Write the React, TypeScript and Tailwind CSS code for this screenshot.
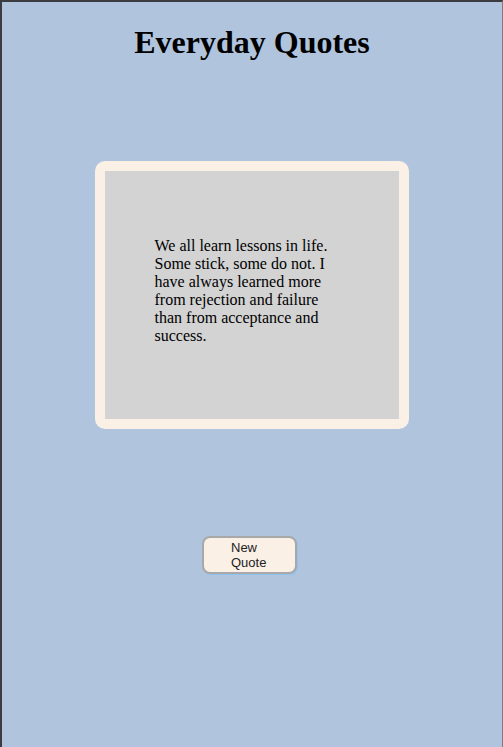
import React from 'react';

const quote =
  'We all learn lessons in life. Some stick, some do not. I have always learned more from rejection and failure than from acceptance and success.';

export default function App() {
  return (
    <div className="h-[747px] w-[503px] overflow-hidden border-t-2 border-l-2 border-r border-t-[#3a3c42] border-l-[#3a3c42] border-r-[#8a7878] bg-[#b0c4de] font-['Liberation_Serif',serif] text-black">
      <h1 className="pt-[22px] text-center text-[32px] font-bold leading-[37px]">Everyday Quotes</h1>

      <div className="mt-[100px] flex justify-center">
        <div className="mr-[1px] w-[314px] rounded-[10px] bg-[#faf0e6] p-[10px]">
          <div className="h-[248px] bg-[#d3d3d3] pt-[66px] pl-[50px]">
            <p className="w-[185px] text-[16px] leading-[18px]">{quote}</p>
          </div>
        </div>
      </div>

      <div className="mt-[107px] flex justify-center">
        <button className="mr-[5px] h-[38px] w-[95px] rounded-[8px] border-2 border-[#a8a8a8] bg-[#faf0e6] pl-[27px] text-left font-['Liberation_Sans',sans-serif] text-[13px] leading-[15px] text-[#222] shadow-[1px_1px_0_#8fc3ef]">
          New
          <br />
          Quote
        </button>
      </div>
    </div>
  );
}
